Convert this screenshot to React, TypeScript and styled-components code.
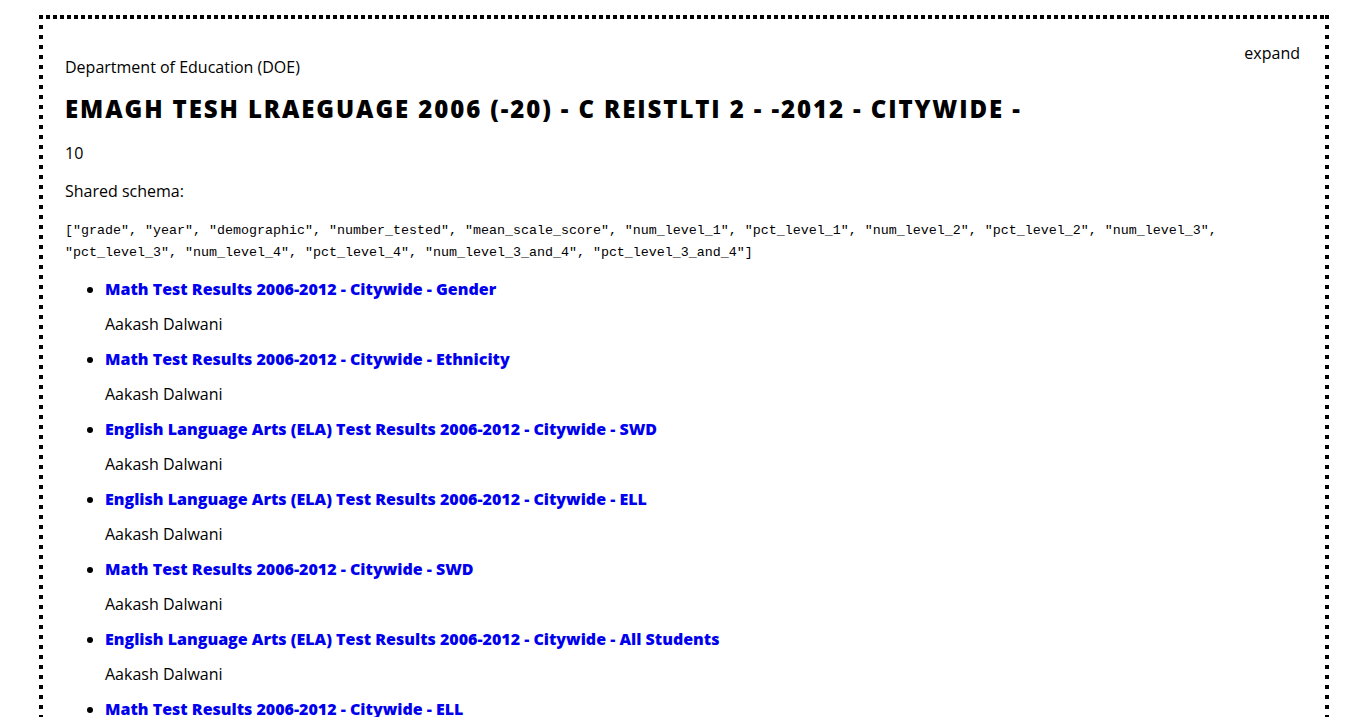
import React from 'react';
import styled, {createGlobalStyle} from 'styled-components';

const GlobalStyle = createGlobalStyle`
  body {
    margin: 0;
    background: #fff;
    font-family: "Open Sans", "Liberation Sans", sans-serif;
    color: #000;
  }
`;

// square dotted frame, drawn with gradients so the dots stay square
const Card = styled.div`
  margin: 15px 40px 0 39px;
  padding: 27px 29px 24px 26px;
  background:
    linear-gradient(to right, #000 4px, transparent 4px) top left / 7px 4px repeat-x,
    linear-gradient(to right, #000 4px, transparent 4px) bottom left / 7px 4px repeat-x,
    linear-gradient(to bottom, #000 4px, transparent 4px) top left / 4px 10px repeat-y,
    linear-gradient(to bottom, #000 4px, transparent 4px) top right / 4px 10px repeat-y;
`;

const TopRow = styled.div`
  display: flex;
  justify-content: space-between;
  align-items: flex-start;
`;

const Agency = styled.div`
  margin-top: 14px;
  font-size: 16px;
  line-height: 22px;
`;

const Expand = styled.a`
  font-size: 16px;
  line-height: 22px;
  color: #000;
  cursor: pointer;
`;

const Title = styled.h1`
  margin: 16px 0 0;
  font-size: 24px;
  line-height: 30px;
  font-weight: 800;
  letter-spacing: 1.9px;
  text-transform: uppercase;
`;

const Text = styled.p<{gap: number}>`
  margin: ${(p) => p.gap}px 0 0;
  font-size: 16px;
  line-height: 22px;
`;

const Schema = styled.pre`
  margin: 18px 0 0;
  font-family: "Liberation Mono", "Courier New", monospace;
  font-size: 13.33px;
  line-height: 22px;
  white-space: pre-wrap;
`;

const List = styled.ul`
  margin: 14px 0 0;
  padding-left: 40px;
`;

const Item = styled.li`
  font-size: 16px;
  line-height: 22px;
`;

const Link = styled.a`
  color: #0000ee;
  font-weight: 800;
  text-decoration: none;
`;

const Owner = styled.p`
  margin: 13px 0;
  font-size: 16px;
  line-height: 22px;
`;

const schema = [
  'grade', 'year', 'demographic', 'number_tested', 'mean_scale_score',
  'num_level_1', 'pct_level_1', 'num_level_2', 'pct_level_2', 'num_level_3',
  'pct_level_3', 'num_level_4', 'pct_level_4', 'num_level_3_and_4', 'pct_level_3_and_4',
];

const datasets = [
  'Math Test Results 2006-2012 - Citywide - Gender',
  'Math Test Results 2006-2012 - Citywide - Ethnicity',
  'English Language Arts (ELA) Test Results 2006-2012 - Citywide - SWD',
  'English Language Arts (ELA) Test Results 2006-2012 - Citywide - ELL',
  'Math Test Results 2006-2012 - Citywide - SWD',
  'English Language Arts (ELA) Test Results 2006-2012 - Citywide - All Students',
  'Math Test Results 2006-2012 - Citywide - ELL',
  'English Language Arts (ELA) Test Results 2006-2012 - Citywide - Gender',
  'English Language Arts (ELA) Test Results 2006-2012 - Citywide - Ethnicity',
  'Math Test Results 2006-2012 - Citywide - All Students',
];

function App(): React.ReactElement {
  return (
    <>
      <GlobalStyle />
      <Card>
        <TopRow>
          <Agency>Department of Education (DOE)</Agency>
          <Expand>expand</Expand>
        </TopRow>
        <Title>Emagh Tesh Lraeguage 2006 (-20) - C Reistlti 2 - -2012 - Citywide -</Title>
        <Text gap={18}>10</Text>
        <Text gap={16}>Shared schema:</Text>
        <Schema>[{schema.map((s) => `"${s}"`).join(', ')}]</Schema>
        <List>
          {datasets.map((name, i) => (
            <Item key={i}>
              <Link href='#'>{name}</Link>
              <Owner>Aakash Dalwani</Owner>
            </Item>
          ))}
        </List>
      </Card>
    </>
  );
}

export default App;
